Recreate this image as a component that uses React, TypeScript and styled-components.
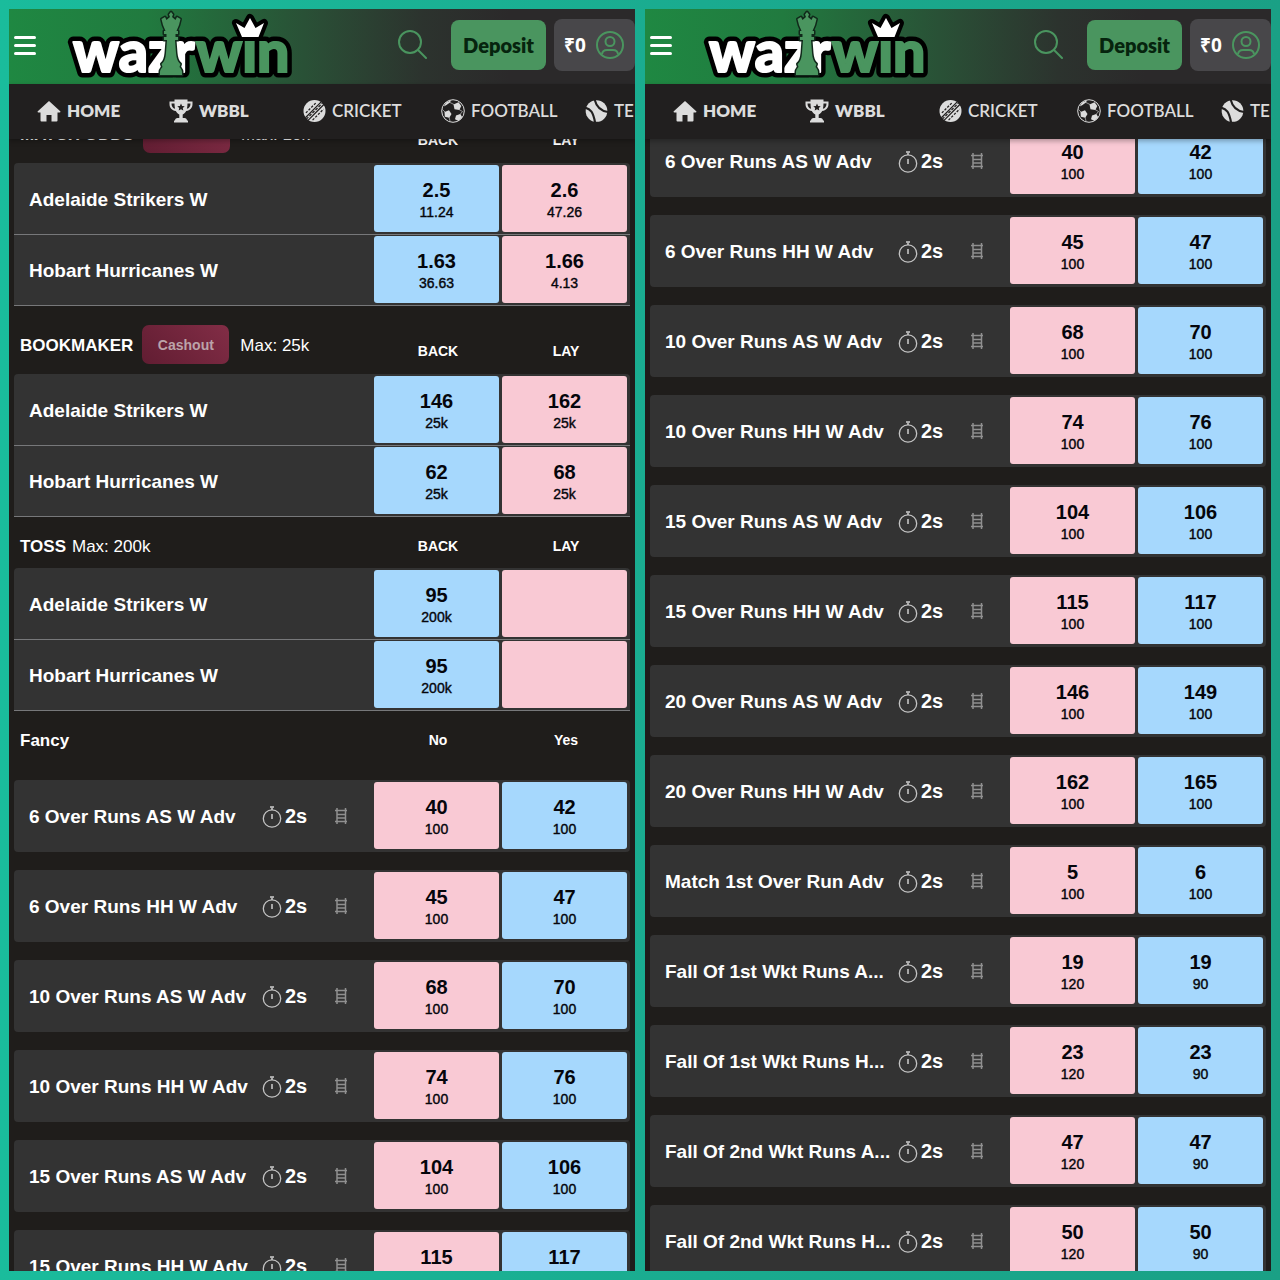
import React, { useLayoutEffect, useRef } from "react";
import styled, { createGlobalStyle, css } from "styled-components";

const green = "#4a955f";
const sans = `"Liberation Sans", Arial, sans-serif`;
const lato = `Lato, "Open Sans", sans-serif`;

const GlobalStyle = createGlobalStyle`
  *, *::before, *::after { box-sizing: border-box; }
  body { margin: 0; font-family: ${sans}; background: #1abc9c; }
  button { border: 0; margin: 0; padding: 0; font: inherit; color: inherit; background: none; cursor: pointer; }
  h2, p, ul { margin: 0; padding: 0; }
  ul { list-style: none; }
  svg { display: block; flex: none; }
`;

const Page = styled.main`
  display: grid;
  grid-template-columns: 1fr 1fr;
  gap: 10px;
  height: 100vh;
  padding: 9px;
  background: linear-gradient(90deg, #1abc9c 0%, #1aab8f 55%, #1aa085 100%);
`;

const Panel = styled.section`
  display: flex;
  flex-direction: column;
  min-width: 0;
  min-height: 0;
  overflow: hidden;
  background: #1f1d1b;
  color: #fff;
`;

const TopBar = styled.header`
  display: flex;
  flex: none;
  align-items: center;
  height: 75px;
  padding-left: 5px;
  padding-bottom: 3px;
  background: linear-gradient(90deg, #1f8842 0%, #217a3f 22%, #2a4c35 50%, #2c332e 66%, #2b292a 80%, #2b292a 100%);
`;

const MenuButton = styled.button`
  display: flex;
  flex-direction: column;
  gap: 5px;
  width: 22px;
`;

const MenuLine = styled.span`
  height: 3px;
  border-radius: 2px;
  background: #fff;
`;

const LogoLink = styled.a`
  margin-left: 30px;
  margin-right: auto;
`;

const LogoText = styled.text`
  font-family: ${lato};
  font-weight: 900;
  font-size: 57px;
`;

const SearchButton = styled.button`
  margin-right: 24px;
`;

const DepositButton = styled.button`
  width: 95px;
  height: 50px;
  margin-right: 8px;
  border-radius: 8px;
  background: ${green};
  color: #06240e;
  font-family: ${lato};
  font-size: 20px;
  font-weight: 800;
`;

const AccountButton = styled.button`
  display: flex;
  align-items: center;
  justify-content: space-between;
  width: 81px;
  height: 52px;
  padding: 0 11px 0 10px;
  border-radius: 8px;
  background: #48474a;
  font-family: "Open Sans", sans-serif;
  font-size: 19px;
  font-weight: 700;
`;

const Nav = styled.nav`
  position: relative;
  z-index: 1;
  display: grid;
  flex: none;
  grid-template-columns: 132px 134px 138px 144px auto;
  align-items: center;
  height: 55px;
  padding-left: 28px;
  padding-bottom: 2px;
  background: #211f1f;
  box-shadow: 0 2px 5px rgba(0, 0, 0, 0.3);
`;

const NavLink = styled.a<{ $bold?: boolean }>`
  display: flex;
  align-items: center;
  gap: 6px;
  color: #dcdcdc;
  font-family: ${lato};
  font-size: 17px;
  font-weight: ${(p) => (p.$bold ? 800 : 600)};
  line-height: 24px;
  text-decoration: none;
`;

const Scroller = styled.div`
  flex: 1;
  min-height: 0;
  padding: 0 5px;
  overflow-y: auto;
  scrollbar-width: none;
`;

const MarketHead = styled.div<{ $spaced?: boolean }>`
  display: flex;
  align-items: flex-end;
  padding: ${(p) => (p.$spaced ? "19px 0 10px 6px" : "16px 0 9px 6px")};
`;

const MarketTitle = styled.div`
  display: flex;
  flex: 1;
  align-items: center;
  gap: 6px;
  font-size: 17px;
  line-height: 24px;
`;

const MarketName = styled.h2`
  padding-top: 2px;
  font-size: 17px;
  font-weight: 700;
`;

const MaxBet = styled.p<{ $inset?: boolean }>`
  padding-top: 2px;
  padding-left: ${(p) => (p.$inset ? "5px" : "0")};
`;

const Cashout = styled.button`
  width: 87px;
  height: 39px;
  margin-left: 3px;
  border-radius: 7px;
  background: linear-gradient(45deg, #611d32, #822d46);
  color: #bba3a9;
  font-size: 14px;
  font-weight: 700;
`;

const ColumnLabel = styled.span`
  width: 128px;
  font-size: 14px;
  font-weight: 700;
  line-height: 26px;
  text-align: center;
`;

const rowBase = css`
  display: flex;
  align-items: center;
  padding-left: 15px;
  padding-right: 3px;
  background: #333;
`;

const RunnerRow = styled.li`
  ${rowBase}
  padding-top: 1px;
  padding-bottom: 2px;
  border-bottom: 1px solid #77787a;
  &:first-child {
    padding-top: 2px;
    border-radius: 4px 4px 0 0;
  }
`;

const FancyList = styled.ul<{ $offset?: boolean }>`
  display: flex;
  flex-direction: column;
  gap: 18px;
  padding: ${(p) => (p.$offset ? "18px 0" : "0 0 18px")};
`;

const FancyRow = styled.li`
  ${rowBase}
  padding-top: 2px;
  padding-bottom: 3px;
  border-radius: 4px;
`;

const RowName = styled.span`
  flex: 1;
  min-width: 0;
  padding-top: 2px;
  overflow: hidden;
  font-size: 19px;
  font-weight: 700;
  line-height: 26px;
  text-overflow: ellipsis;
  white-space: nowrap;
`;

const Delay = styled.span`
  display: flex;
  align-items: center;
  gap: 3px;
  width: 73px;
  margin-left: 5px;
  padding-top: 2px;
  font-size: 20px;
  font-weight: 700;
`;

const LadderButton = styled.button`
  margin-right: 27px;
`;

const Prices = styled.div`
  display: flex;
  gap: 3px;
`;

const Price = styled.button<{ $tone: Tone }>`
  display: flex;
  flex-direction: column;
  align-items: center;
  justify-content: center;
  width: 125px;
  height: 67px;
  padding-top: 2px;
  border-radius: 3px;
  background: ${(p) => (p.$tone === "blue" ? "#a6d8fd" : "#f9c9d4")};
  color: #05060c;
`;

const Odds = styled.span`
  font-size: 20px;
  font-weight: 700;
  line-height: 24px;
`;

const Stake = styled.span`
  font-size: 14px;
  line-height: 20px;
  -webkit-text-stroke: 0.4px #05060c;
`;

type Tone = "blue" | "pink";
type Quote = [string, string] | null;
interface Runner {
  name: string;
  first: Quote;
  second: Quote;
}
interface Market {
  name: string;
  max: string;
  cashout?: boolean;
  runners: Runner[];
}

const markets: Market[] = [
  {
    name: "MATCH ODDS",
    max: "10k",
    cashout: true,
    runners: [
      { name: "Adelaide Strikers W", first: ["2.5", "11.24"], second: ["2.6", "47.26"] },
      { name: "Hobart Hurricanes W", first: ["1.63", "36.63"], second: ["1.66", "4.13"] },
    ],
  },
  {
    name: "BOOKMAKER",
    max: "25k",
    cashout: true,
    runners: [
      { name: "Adelaide Strikers W", first: ["146", "25k"], second: ["162", "25k"] },
      { name: "Hobart Hurricanes W", first: ["62", "25k"], second: ["68", "25k"] },
    ],
  },
  {
    name: "TOSS",
    max: "200k",
    runners: [
      { name: "Adelaide Strikers W", first: ["95", "200k"], second: null },
      { name: "Hobart Hurricanes W", first: ["95", "200k"], second: null },
    ],
  },
];

const over = (name: string, no: string, yes: string): Runner => ({
  name,
  first: [no, "100"],
  second: [yes, "100"],
});
const wicket = (name: string, runs: string): Runner => ({
  name,
  first: [runs, "120"],
  second: [runs, "90"],
});

const fancy: Runner[] = [
  over("6 Over Runs AS W Adv", "40", "42"),
  over("6 Over Runs HH W Adv", "45", "47"),
  over("10 Over Runs AS W Adv", "68", "70"),
  over("10 Over Runs HH W Adv", "74", "76"),
  over("15 Over Runs AS W Adv", "104", "106"),
  over("15 Over Runs HH W Adv", "115", "117"),
  over("20 Over Runs AS W Adv", "146", "149"),
  over("20 Over Runs HH W Adv", "162", "165"),
  over("Match 1st Over Run Adv", "5", "6"),
  wicket("Fall Of 1st Wkt Runs A...", "19"),
  wicket("Fall Of 1st Wkt Runs H...", "23"),
  wicket("Fall Of 2nd Wkt Runs A...", "47"),
  wicket("Fall Of 2nd Wkt Runs H...", "50"),
];

const crown = "M176 28 L170 14 L178.500 19 L184 9 L189.500 19 L198 14 L192.500 28 Z";

const Logo = () => (
  <svg width="230" height="72" viewBox="0 0 230 72" role="img" aria-label="wazirwin">
    <g fill="#000" stroke="#000" strokeWidth="11" strokeLinejoin="round">
      <LogoText x="7" y="63">waz</LogoText>
      <LogoText x="107" y="63">r</LogoText>
      <LogoText x="130" y="63">win</LogoText>
      <path d={crown} strokeWidth="8" />
    </g>
    <g fill="#fff" stroke="#fff" strokeWidth="2" strokeLinejoin="round">
      <LogoText x="7" y="63">waz</LogoText>
      <LogoText x="107" y="63">r</LogoText>
    </g>
    <LogoText x="130" y="63" fill={green} stroke={green} strokeWidth="2">win</LogoText>
    <path d={crown} fill="#fff" stroke="#000" strokeWidth="6" strokeLinejoin="round" paintOrder="stroke" />
    <path
      d="M105 3 L107 5.500 L106 8 L109.500 11 L111 8 L114.500 10 L113 16 L110.500 22 H112 V25 H109.500 V28 H112 V31 H109 L110 44 C110.500 50 112 53 114.500 55 L113.500 58 C115 60 116 61 116 63 V66 H94 V63 C94 61 95 60 96.500 58 L95.500 55 C98 53 99.500 50 100 44 L101 31 H98 V28 H100.500 V25 H98 V22 H99.500 L97 16 L95.500 10 L99 8 L100.500 11 L104 8 L103 5.500 Z"
      fill={green}
      stroke="#10281a"
      strokeWidth="3"
      strokeLinejoin="round"
      paintOrder="stroke"
    />
  </svg>
);

const SearchIcon = () => (
  <svg width="29" height="30" viewBox="0 0 29 30" fill="none" stroke={green} strokeWidth="2" strokeLinecap="round">
    <circle cx="12" cy="12" r="11" />
    <path d="M20 20 L28 28" />
  </svg>
);

const AccountIcon = () => (
  <svg width="28" height="28" viewBox="0 0 28 28" fill="none" stroke={green} strokeWidth="2">
    <circle cx="14" cy="14" r="13" />
    <circle cx="14" cy="10.500" r="4.500" />
    <path d="M6 23 C6.500 20 8.500 19 11 19 h6 C19.500 19 21.500 20 22 23" />
  </svg>
);

const HomeIcon = () => (
  <svg width="24" height="24" viewBox="0 0 24 24" fill="#dcdcdc">
    <path d="M12 2 L23.500 12.500 Q23.500 13.500 22.500 13.500 H20.500 V21.500 Q20.500 22.500 19.500 22.500 H14.500 V16 H9.500 V22.500 H4.500 Q3.500 22.500 3.500 21.500 V13.500 H1.500 Q.5 13.500 .5 12.500 Z" />
  </svg>
);

const TrophyIcon = () => (
  <svg width="24" height="24" viewBox="0 0 24 24" fill="#dcdcdc">
    <path d="M5.500 .5 H18.500 V2.500 H23.500 V5 C23.500 9 21 11.500 17.200 12 C16.200 13.800 14.800 15 13.700 15.400 V19 H15.500 C17 19 18 20 18 21.500 H19 V23.500 H5 V21.500 H6 C6 20 7 19 8.500 19 H10.300 V15.400 C9.200 15 7.800 13.800 6.800 12 C3 11.500 .5 9 .5 5 V2.500 H5.500 Z" />
    <path d="M2.500 4.500 H5.500 C5.500 6.500 5.700 8.300 6.100 9.800 C3.800 9.200 2.500 7.500 2.500 4.500 Z M21.500 4.500 H18.500 C18.500 6.500 18.300 8.300 17.900 9.800 C20.200 9.200 21.500 7.500 21.500 4.500 Z" fill="#211f1f" />
    <path d="M12 4.500 l1.100 2.400 2.600.3 -1.900 1.800 .5 2.600 -2.300-1.300 -2.300 1.300 .5-2.600 -1.900-1.800 2.600-.3 Z" fill="#211f1f" />
  </svg>
);

const CricketIcon = () => (
  <svg width="23" height="24" viewBox="0 0 24 24">
    <circle cx="12" cy="12" r="11.500" fill="#dcdcdc" />
    <g stroke="#211f1f" fill="none" strokeWidth="1.300">
      <path d="M5 22 L22 5 M2.500 19 L19 2.500" />
      <path d="M3 14 L14 3 M10 21.500 L21.500 10" strokeDasharray="2.500 1.500" />
      <path d="M3.500 20.500 L20.500 3.500" strokeDasharray="3 1.500" />
    </g>
  </svg>
);

const FootballIcon = () => (
  <svg width="24" height="24" viewBox="0 0 24 24">
    <circle cx="12" cy="12" r="11.300" fill="none" stroke="#dcdcdc" strokeWidth="1" />
    <g fill="#dcdcdc">
      <path d="M12.500 5.500 L17.500 3.300 L20.300 7 L18.300 11 L13.500 10.300 Z" />
      <path d="M3.500 13 L8 11.300 L10.500 15 L8.300 18.700 L3.800 17.800 Z" />
      <path d="M15 16.500 L19.300 15 L21.300 18.300 L17.500 22 L14 20.300 Z" />
      <path d="M5 3.500 L10 1.200 L9 3.500 L5.500 6 L2.800 7.500 Z" />
    </g>
    <path
      d="M9 3.500 L13 5.500 M18 10.500 L21.500 12.500 L19 15.500 M8 18.200 L9 22 M4 13 L1.500 10.500"
      stroke="#dcdcdc"
      strokeWidth=".6"
      fill="none"
    />
  </svg>
);

const TennisIcon = () => (
  <svg width="23" height="24" viewBox="0 0 24 24">
    <circle cx="12" cy="12" r="11.300" fill="#dcdcdc" />
    <g fill="none" stroke="#211f1f" strokeWidth="2.200">
      <path d="M0 8.500 C6 10 8.500 13 10.500 24" />
      <path d="M10 0 C12 8 16 12 24 13" />
    </g>
  </svg>
);

const ClockIcon = () => (
  <svg width="20" height="22" viewBox="0 0 20 22" fill="none" stroke="#c4c4c4">
    <circle cx="10" cy="12.500" r="8.700" strokeWidth="1.300" />
    <path d="M10 1.500 V4 M10 8 V13" strokeWidth="1.600" />
    <path d="M8 1 H12" strokeWidth="1.600" />
  </svg>
);

const LadderIcon = () => (
  <svg width="12" height="18" viewBox="0 0 12 18" fill="none" stroke="#909090">
    <path d="M2 1 V17 M10.500 1 V17" strokeWidth="1.500" />
    <path d="M0 3.500 H12 M2 7.500 H10 M2 11 H10 M0 14.500 H12" strokeWidth="1.500" />
  </svg>
);

const navItems = [
  { label: "HOME", icon: <HomeIcon />, bold: true },
  { label: "WBBL", icon: <TrophyIcon />, bold: true },
  { label: "CRICKET", icon: <CricketIcon /> },
  { label: "FOOTBALL", icon: <FootballIcon /> },
  { label: "TENNIS", icon: <TennisIcon /> },
];

const PriceCell = ({ quote, tone }: { quote: Quote; tone: Tone }) => (
  <Price type="button" $tone={tone} aria-label={quote ? undefined : "No price"}>
    {quote && (
      <>
        <Odds>{quote[0]}</Odds>
        <Stake>{quote[1]}</Stake>
      </>
    )}
  </Price>
);

const MarketBlock = ({ market }: { market: Market }) => (
  <section>
    <MarketHead $spaced={market.cashout}>
      <MarketTitle>
        <MarketName>{market.name}</MarketName>
        {market.cashout && <Cashout type="button">Cashout</Cashout>}
        <MaxBet $inset={market.cashout}>Max: {market.max}</MaxBet>
      </MarketTitle>
      <ColumnLabel>BACK</ColumnLabel>
      <ColumnLabel>LAY</ColumnLabel>
    </MarketHead>
    <ul>
      {market.runners.map((r) => (
        <RunnerRow key={r.name}>
          <RowName>{r.name}</RowName>
          <Prices>
            <PriceCell quote={r.first} tone="blue" />
            <PriceCell quote={r.second} tone="pink" />
          </Prices>
        </RunnerRow>
      ))}
    </ul>
  </section>
);

const FancyRows = ({ rows, offset }: { rows: Runner[]; offset?: boolean }) => (
  <FancyList $offset={offset}>
    {rows.map((r) => (
      <FancyRow key={r.name}>
        <RowName>{r.name}</RowName>
        <Delay>
          <ClockIcon />
          2s
        </Delay>
        <LadderButton type="button" aria-label="Ladder">
          <LadderIcon />
        </LadderButton>
        <Prices>
          <PriceCell quote={r.first} tone="pink" />
          <PriceCell quote={r.second} tone="blue" />
        </Prices>
      </FancyRow>
    ))}
  </FancyList>
);

const Screen = ({ scrolled, children }: { scrolled: number; children: React.ReactNode }) => {
  const scroller = useRef<HTMLDivElement>(null);
  useLayoutEffect(() => {
    if (scroller.current) scroller.current.scrollTop = scrolled;
  }, [scrolled]);

  return (
    <Panel>
      <TopBar>
        <MenuButton type="button" aria-label="Menu">
          <MenuLine />
          <MenuLine />
          <MenuLine />
        </MenuButton>
        <LogoLink href="#">
          <Logo />
        </LogoLink>
        <SearchButton type="button" aria-label="Search">
          <SearchIcon />
        </SearchButton>
        <DepositButton type="button">Deposit</DepositButton>
        <AccountButton type="button">
          ₹0
          <AccountIcon />
        </AccountButton>
      </TopBar>
      <Nav>
        {navItems.map((n) => (
          <NavLink key={n.label} href="#" $bold={n.bold}>
            {n.icon}
            {n.label}
          </NavLink>
        ))}
      </Nav>
      <Scroller ref={scroller}>{children}</Scroller>
    </Panel>
  );
};

export default function App() {
  return (
    <>
      <GlobalStyle />
      <Page>
        <Screen scrolled={44}>
          {markets.map((m) => (
            <MarketBlock key={m.name} market={m} />
          ))}
          <section>
            <MarketHead>
              <MarketTitle>
                <MarketName>Fancy</MarketName>
              </MarketTitle>
              <ColumnLabel>No</ColumnLabel>
              <ColumnLabel>Yes</ColumnLabel>
            </MarketHead>
            <FancyRows rows={fancy.slice(0, 6)} offset />
          </section>
        </Screen>
        <Screen scrolled={14}>
          <FancyRows rows={fancy} />
        </Screen>
      </Page>
    </>
  );
}
